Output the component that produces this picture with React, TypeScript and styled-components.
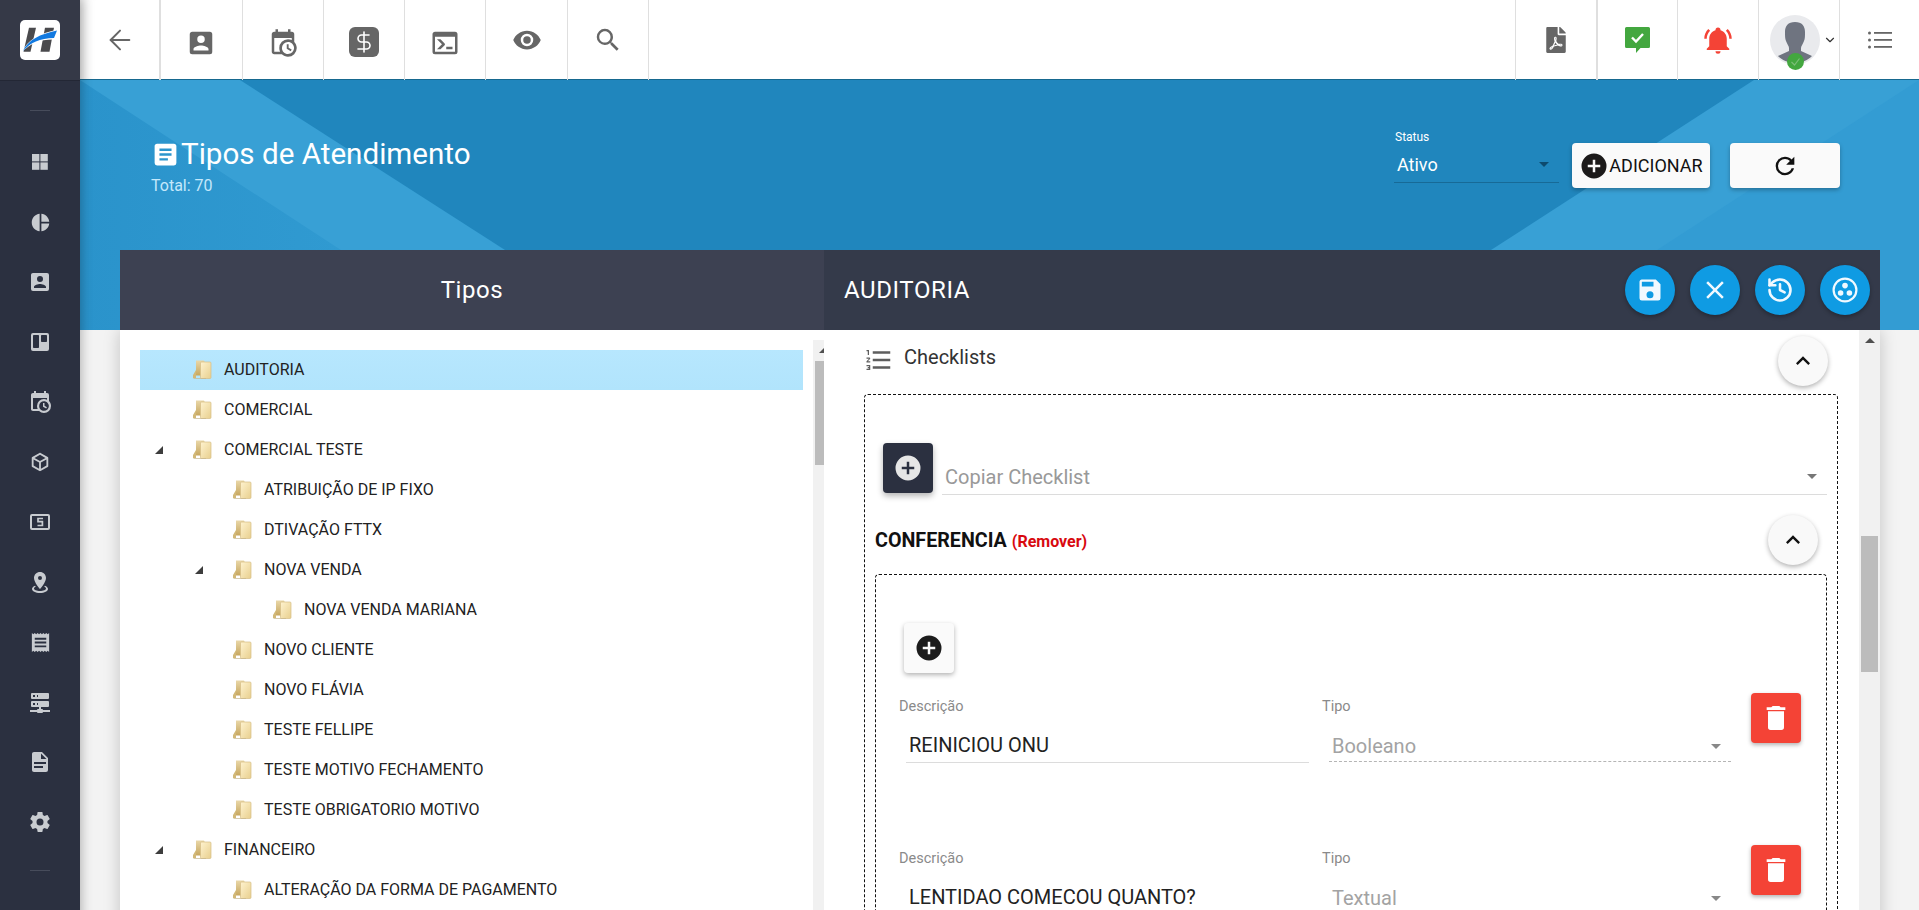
import React from "react";
import styled, { createGlobalStyle } from "styled-components";
import { ArrowLeft, DollarSign, History, ChevronDown } from "lucide-react";
import { FaFilePdf } from "react-icons/fa";

const Global = createGlobalStyle`
  html, body { margin: 0; padding: 0; height: 100%; overflow: hidden; }
  body { font-family: Roboto, "Liberation Sans", sans-serif; background: #f3f3f3; color: #222; }
  * { box-sizing: border-box; }
`;

const P = {
  account: "M6,17C6,15 10,14 12,14C14,14 18,15 18,17V18H6M15,9A3,3 0 0,1 12,12A3,3 0 0,1 9,9A3,3 0 0,1 12,6A3,3 0 0,1 15,9M3,5V19A2,2 0 0,0 5,21H19A2,2 0 0,0 21,19V5A2,2 0 0,0 19,3H5C3.89,3 3,3.9 3,5Z",
  calendar: "M15,13H16.5V15.82L18.94,17.23L18.19,18.53L15,16.69V13M19,8H5V19H9.67C9.24,18.09 9,17.07 9,16A7,7 0 0,1 16,9C17.07,9 18.09,9.24 19,9.67V8M5,21C3.89,21 3,20.1 3,19V5C3,3.89 3.89,3 5,3H6V1H8V3H16V1H18V3H19A2,2 0 0,1 21,5V11.1C22.24,12.36 23,14.09 23,16A7,7 0 0,1 16,23C14.09,23 12.36,22.24 11.1,21H5M16,11.15A4.85,4.85 0 0,0 11.15,16C11.15,18.68 13.32,20.85 16,20.85A4.85,4.85 0 0,0 20.85,16C20.85,13.32 18.68,11.15 16,11.15Z",
  console: "M20,19V7H4V19H20M20,3A2,2 0 0,1 22,5V19A2,2 0 0,1 20,21H4A2,2 0 0,1 2,19V5C2,3.89 2.9,3 4,3H20M13,17V15H18V17H13M9.58,13L5.57,9H8.4L11.7,12.3C12.09,12.69 12.09,13.33 11.7,13.72L8.42,17H5.59L9.58,13Z",
  eye: "M12,9A3,3 0 0,0 9,12A3,3 0 0,0 12,15A3,3 0 0,0 15,12A3,3 0 0,0 12,9M12,17A5,5 0 0,1 7,12A5,5 0 0,1 12,7A5,5 0 0,1 17,12A5,5 0 0,1 12,17M12,4.5C7,4.5 2.73,7.61 1,12C2.73,16.39 7,19.5 12,19.5C17,19.5 21.27,16.39 23,12C21.27,7.61 17,4.5 12,4.5Z",
  magnify: "M9.5,3A6.5,6.5 0 0,1 16,9.5C16,11.11 15.41,12.59 14.44,13.73L14.71,14H15.5L20.5,19L19,20.5L14,15.5V14.71L13.73,14.44C12.59,15.41 11.11,16 9.5,16A6.5,6.5 0 0,1 3,9.5A6.5,6.5 0 0,1 9.5,3M9.5,5C7,5 5,7 5,9.5C5,12 7,14 9.5,14C12,14 14,12 14,9.5C14,7 12,5 9.5,5Z",
  bell: "M21,19V20H3V19L5,17V11C5,7.9 7.03,5.17 10,4.29C10,4.19 10,4.1 10,4A2,2 0 0,1 12,2A2,2 0 0,1 14,4C14,4.1 14,4.19 14,4.29C16.97,5.17 19,7.9 19,11V17L21,19M14,21A2,2 0 0,1 12,23A2,2 0 0,1 10,21M19.75,3.19L18.33,4.61C20.04,6.3 21,8.6 21,11H23C23,8.07 21.84,5.25 19.75,3.19M1,11H3C3,8.6 3.96,6.3 5.67,4.61L4.25,3.19C2.16,5.25 1,8.07 1,11Z",
  pie: "M11,2V22C5.9,21.5 2,17.2 2,12C2,6.8 5.9,2.5 11,2M13,2V11H22C21.5,6.2 17.8,2.5 13,2M13,13V22C17.7,21.5 21.5,17.8 22,13H13Z",
  trello: "M5,3H19A2,2 0 0,1 21,5V19A2,2 0 0,1 19,21H5A2,2 0 0,1 3,19V5A2,2 0 0,1 5,3M5.8,5A0.8,0.8 0 0,0 5,5.8V17.2A0.8,0.8 0 0,0 5.8,18H10.2A0.8,0.8 0 0,0 11,17.2V5.8A0.8,0.8 0 0,0 10.2,5H5.8M13.8,5A0.8,0.8 0 0,0 13,5.8V11.2A0.8,0.8 0 0,0 13.8,12H18.2A0.8,0.8 0 0,0 19,11.2V5.8A0.8,0.8 0 0,0 18.2,5H13.8Z",
  cube: "M21,16.5C21,16.88 20.79,17.21 20.47,17.38L12.57,21.82C12.41,21.94 12.21,22 12,22C11.79,22 11.59,21.94 11.43,21.82L3.53,17.38C3.21,17.21 3,16.88 3,16.5V7.5C3,7.12 3.21,6.79 3.53,6.62L11.43,2.18C11.59,2.06 11.79,2 12,2C12.21,2 12.41,2.06 12.57,2.18L20.47,6.62C20.79,6.79 21,7.12 21,7.5V16.5M12,4.15L6.04,7.5L12,10.85L17.96,7.5L12,4.15M5,15.91L11,19.29V12.58L5,9.21V15.91M19,15.91V9.21L13,12.58V19.29L19,15.91Z",
  marker: "M12,2C15.31,2 18,4.66 18,7.95C18,12.41 12,19 12,19C12,19 6,12.41 6,7.95C6,4.66 8.69,2 12,2M12,6A2,2 0 0,0 10,8A2,2 0 0,0 12,10A2,2 0 0,0 14,8A2,2 0 0,0 12,6M20,19C20,21.21 16.42,23 12,23C7.58,23 4,21.21 4,19C4,17.71 5.22,16.56 7.11,15.83L7.75,16.74C6.67,17.19 6,17.81 6,18.5C6,19.88 8.69,21 12,21C15.31,21 18,19.88 18,18.5C18,17.81 17.33,17.19 16.25,16.74L16.89,15.83C18.78,16.56 20,17.71 20,19Z",
  receipt: "M3,22L4.5,20.5L6,22L7.5,20.5L9,22L10.5,20.5L12,22L13.5,20.5L15,22L16.5,20.5L18,22L19.5,20.5L21,22V2L19.5,3.5L18,2L16.5,3.5L15,2L13.5,3.5L12,2L10.5,3.5L9,2L7.5,3.5L6,2L4.5,3.5L3,2M18,9H6V7H18M18,13H6V11H18M18,17H6V15H18",
  server: "M13,19H14A1,1 0 0,1 15,20H22V22H15A1,1 0 0,1 14,23H10A1,1 0 0,1 9,22H2V20H9A1,1 0 0,1 10,19H11V17H4A1,1 0 0,1 3,16V12A1,1 0 0,1 4,11H20A1,1 0 0,1 21,12V16A1,1 0 0,1 20,17H13V19M4,3H20A1,1 0 0,1 21,4V8A1,1 0 0,1 20,9H4A1,1 0 0,1 3,8V4A1,1 0 0,1 4,3M9,7H10V5H9V7M9,15H10V13H9V15M5,5V7H7V5H5M5,13V15H7V13H5Z",
  file: "M13,9H18.5L13,3.5V9M6,2H14L20,8V20A2,2 0 0,1 18,22H6C4.89,22 4,21.1 4,20V4C4,2.89 4.89,2 6,2M15,18V16H6V18H15M18,14V12H6V14H18Z",
  cog: "M12,15.5A3.5,3.5 0 0,1 8.5,12A3.5,3.5 0 0,1 12,8.5A3.5,3.5 0 0,1 15.5,12A3.5,3.5 0 0,1 12,15.5M19.43,12.97C19.47,12.65 19.5,12.33 19.5,12C19.5,11.67 19.47,11.34 19.43,11L21.54,9.37C21.73,9.22 21.78,8.95 21.66,8.73L19.66,5.27C19.54,5.05 19.27,4.96 19.05,5.05L16.56,6.05C16.04,5.66 15.5,5.32 14.87,5.07L14.5,2.42C14.46,2.18 14.25,2 14,2H10C9.75,2 9.54,2.18 9.5,2.42L9.13,5.07C8.5,5.32 7.96,5.66 7.44,6.05L4.95,5.05C4.73,4.96 4.46,5.05 4.34,5.27L2.34,8.73C2.21,8.95 2.27,9.22 2.46,9.37L4.57,11C4.53,11.34 4.5,11.67 4.5,12C4.5,12.33 4.53,12.65 4.57,12.97L2.46,14.63C2.27,14.78 2.21,15.05 2.34,15.27L4.34,18.73C4.46,18.95 4.73,19.03 4.95,18.95L7.44,17.94C7.96,18.34 8.5,18.68 9.13,18.93L9.5,21.58C9.54,21.82 9.75,22 10,22H14C14.25,22 14.46,21.82 14.5,21.58L14.87,18.93C15.5,18.67 16.04,18.34 16.56,17.94L19.05,18.95C19.27,19.03 19.54,18.95 19.66,18.73L21.66,15.27C21.78,15.05 21.73,14.78 21.54,14.63L19.43,12.97Z",
  textBox: "M14,17H7V15H14M17,13H7V11H17M17,9H7V7H17M19,3H5C3.89,3 3,3.89 3,5V19A2,2 0 0,0 5,21H19A2,2 0 0,0 21,19V5C21,3.89 20.1,3 19,3Z",
  plusCircle: "M17,13H13V17H11V13H7V11H11V7H13V11H17M12,2A10,10 0 0,0 2,12A10,10 0 0,0 12,22A10,10 0 0,0 22,12A10,10 0 0,0 12,2Z",
  refresh: "M17.65,6.35C16.2,4.9 14.21,4 12,4A8,8 0 0,0 4,12A8,8 0 0,0 12,20C15.73,20 18.84,17.45 19.73,14H17.65C16.83,16.33 14.61,18 12,18A6,6 0 0,1 6,12A6,6 0 0,1 12,6C13.66,6 15.14,6.69 16.22,7.78L13,11H20V4L17.65,6.35Z",
  save: "M15,9H5V5H15M12,19A3,3 0 0,1 9,16A3,3 0 0,1 12,13A3,3 0 0,1 15,16A3,3 0 0,1 12,19M17,3H5C3.89,3 3,3.9 3,5V19A2,2 0 0,0 5,21H19A2,2 0 0,0 21,19V7L17,3Z",
  close: "M19,6.41L17.59,5L12,10.59L6.41,5L5,6.41L10.59,12L5,17.59L6.41,19L12,13.41L17.59,19L19,17.59L13.41,12L19,6.41Z",
  chevron: "M7.41,15.41L12,10.83L16.59,15.41L18,14L12,8L6,14L7.41,15.41Z",
  trash: "M19,4H15.5L14.5,3H9.5L8.5,4H5V6H19M6,19A2,2 0 0,0 8,21H16A2,2 0 0,0 18,19V7H6V19Z",
  numbered: "M7,13V11H21V13H7M7,19V17H21V19H7M7,7V5H21V7H7M3,8V5H2V4H4V8H3M2,17V16H5V20H2V19H4V18.5H3V17.5H4V17H2M4.25,10A0.75,0.75 0 0,1 5,10.75C5,10.95 4.92,11.14 4.79,11.27L3.12,13H5V14H2V13.08L4,11H2V10H4.25Z",
};

const Icon = ({ d, size = 24, color = "currentColor" }: { d: string; size?: number; color?: string }) => (
  <svg width={size} height={size} viewBox="0 0 24 24" fill={color} aria-hidden="true"><path d={d} /></svg>
);

/* ---------- page frame ---------- */
const Shell = styled.div`
  display: grid;
  grid-template-columns: 80px 1fr;
  height: 910px;
  width: 1919px;
  overflow: hidden;
`;

/* ---------- sidebar ---------- */
const Side = styled.aside`
  background: #2b3040;
  display: flex;
  flex-direction: column;
  align-items: center;
  box-shadow: 2px 0 10px rgba(0, 0, 0, 0.25);
  position: relative;
  z-index: 3;
`;
const LogoCell = styled.div`
  width: 100%;
  height: 81px;
  flex: none;
  background: #353947;
  border-bottom: 1px solid #232735;
  display: flex;
  align-items: center;
  justify-content: center;
  padding-bottom: 1px;
`;
const LogoTile = styled.div`
  width: 40px;
  height: 40px;
  background: #fff;
  border-radius: 5px;
  display: flex;
`;
const SideRule = styled.div`
  width: 20px;
  height: 1px;
  background: #474c5b;
  flex: none;
  margin-top: ${(p: { $top: number }) => p.$top}px;
`;
const SideList = styled.nav`
  display: flex;
  flex-direction: column;
  margin-top: 21px;
`;
const SideItem = styled.div`
  height: 60px;
  width: 80px;
  display: flex;
  align-items: center;
  justify-content: center;
  color: #c8cbd0;
`;

/* ---------- main ---------- */
const Main = styled.main`
  display: flex;
  flex-direction: column;
  min-width: 0;
  background: #f3f3f3;
`;
const TopBar = styled.header`
  height: 80px;
  flex: none;
  background: #fff;
  display: flex;
  justify-content: space-between;
  box-shadow: inset 16px 0 14px -14px rgba(0, 0, 0, 0.16);
  border-bottom: 1px solid #16688f;
  position: relative;
  z-index: 2;
`;
const TopGroup = styled.div`
  display: flex;
`;
const TopCell = styled.div<{ $w?: number; $strong?: boolean; $right?: boolean; $dy?: number }>`
  width: ${(p) => p.$w ?? 81.3}px;
  height: 80px;
  padding-top: ${(p) => p.$dy ?? 0}px;
  display: flex;
  align-items: center;
  justify-content: center;
  color: #666;
  border-${(p) => (p.$right ? "left" : "right")}: ${(p) => (p.$strong ? 2 : 1)}px solid #dfdfdf;
`;
const MoneyTile = styled.div`
  width: 30px;
  height: 30px;
  border-radius: 6px;
  background: #666;
  color: #fff;
  display: flex;
  align-items: center;
  justify-content: center;
`;
const AvatarWrap = styled.div`
  position: relative;
  width: 50px;
  height: 50px;
  border-radius: 50%;
  background: #e9eaed;
  margin: 0 3px 0 8px;
`;
const AvatarBadge = styled.div`
  position: absolute;
  left: 17px;
  top: 38px;
  width: 17px;
  height: 17px;
  border-radius: 50%;
  background: #43a73f;
  display: flex;
  align-items: center;
  justify-content: center;
`;

/* ---------- hero ---------- */
const Hero = styled.section`
  position: relative;
  height: 250px;
  flex: none;
  padding: 0 39px 0 40px;
  background: #2086bd;
  display: flex;
  flex-direction: column;
`;
const HeroArt = styled.svg`
  position: absolute;
  left: 0;
  top: 0;
  width: 100%;
  height: 250px;
`;
const HeroRow = styled.div`
  position: relative;
  height: 170px;
  flex: none;
  display: flex;
  justify-content: space-between;
`;
const TitleBlock = styled.div`
  padding: 58px 0 0 31px;
  color: #fff;
`;
const TitleLine = styled.h1`
  margin: 0;
  display: flex;
  align-items: center;
  font-size: 29.6px;
  font-weight: 400;
  line-height: 32px;
`;
const TitleIcon = styled.span`
  display: flex;
  margin-right: 1px;
`;
const Total = styled.div`
  font-size: 16px;
  line-height: 18px;
  margin-top: 7px;
  color: #c4e8fb;
`;
const HeroActions = styled.div`
  display: flex;
  padding-top: 49px;
  margin-right: 40px;
`;
const StatusField = styled.div`
  width: 165px;
  margin-right: 13px;
  color: #fff;
`;
const StatusLabel = styled.div`
  font-size: 12px;
  line-height: 16px;
  height: 19px;
  padding-left: 1px;
`;
const StatusValue = styled.div`
  height: 35px;
  border-bottom: 1px solid #176a97;
  display: flex;
  align-items: center;
  justify-content: space-between;
  padding: 0 10px 2px 3px;
  font-size: 18px;
`;
const Caret = styled.span<{ $color: string }>`
  width: 0;
  height: 0;
  border-left: 5px solid transparent;
  border-right: 5px solid transparent;
  border-top: 5px solid ${(p) => p.$color};
  flex: none;
`;
const HeroButton = styled.button<{ $w: number; $mr?: number }>`
  width: ${(p) => p.$w}px;
  height: 45px;
  margin-top: 14px;
  margin-right: ${(p) => p.$mr ?? 0}px;
  background: #fafafa;
  border: 0;
  border-radius: 4px;
  box-shadow: 0 2px 4px rgba(0, 0, 0, 0.28);
  display: flex;
  align-items: center;
  justify-content: center;
  font: 400 18px Roboto, sans-serif;
  color: #111;
  padding: 0;
`;

/* ---------- panel head ---------- */
const PanelHead = styled.div`
  position: relative;
  height: 80px;
  flex: none;
  display: grid;
  grid-template-columns: 704px 1fr;
  color: #fff;
`;
const HeadLeft = styled.div`
  background: #3d4152;
  display: flex;
  align-items: center;
  justify-content: center;
  font-size: 24px;
  letter-spacing: 0.6px;
`;
const HeadRight = styled.div`
  background: #343a4a;
  display: flex;
  align-items: center;
  justify-content: space-between;
  padding: 0 10px 0 20px;
  font-size: 24px;
  letter-spacing: 0.6px;
`;
const HeadButtons = styled.div`
  display: flex;
  gap: 15px;
`;
const RoundBlue = styled.button`
  width: 50px;
  height: 50px;
  border-radius: 50%;
  background: #0f9be3;
  color: #f1f9ff;
  border: 0;
  padding: 0;
  display: flex;
  align-items: center;
  justify-content: center;
  box-shadow: 0 2px 4px rgba(0, 0, 0, 0.3);
`;

/* ---------- panel body ---------- */
const PanelBody = styled.div`
  flex: 1;
  min-height: 0;
  margin: 0 39px 0 40px;
  background: #fff;
  box-shadow: 0 0 16px rgba(0, 0, 0, 0.2);
  display: grid;
  grid-template-columns: 704px 1fr;
  overflow: hidden;
`;
const TreePane = styled.div`
  display: flex;
  padding: 10px 0 8px 20px;
  min-height: 0;
  overflow: hidden;
`;
const TreeList = styled.ul`
  list-style: none;
  width: 663px;
  margin: 10px 10px 0 0;
  padding: 0;
  overflow: hidden;
  flex: none;
`;
const TreeRow = styled.li<{ $depth: number; $active?: boolean }>`
  height: 40px;
  display: flex;
  align-items: center;
  padding-left: ${(p) => 14 + p.$depth * 40}px;
  padding-bottom: 1px;
  background: ${(p) => (p.$active ? "linear-gradient(#b7e7fe, #b1e4fc)" : "transparent")};
  font-size: 16px;
  color: #222;
`;
const Twist = styled.span`
  width: 38px;
  flex: none;
  display: flex;
  padding-left: 1px;
`;
const FolderBox = styled.span`
  display: flex;
  margin-right: 12px;
`;
const ScrollTrack = styled.div`
  width: 21px;
  flex: none;
  background: #f1f1f1;
  display: flex;
  flex-direction: column;
  align-items: center;
  justify-content: space-between;
  position: relative;
`;
const ScrollThumb = styled.div<{ $top: number; $h: number }>`
  position: absolute;
  left: 2px;
  right: 2px;
  top: ${(p) => p.$top}px;
  height: ${(p) => p.$h}px;
  background: #bcbcbc;
`;
const ArrowBtn = styled.div<{ $down?: boolean }>`
  height: 21px;
  display: flex;
  align-items: center;
  justify-content: center;
  &::after {
    content: "";
    width: 0;
    height: 0;
    border-left: 5px solid transparent;
    border-right: 5px solid transparent;
    ${(p) => (p.$down ? "border-top: 5px solid #505050;" : "border-bottom: 5px solid #505050;")}
  }
`;

const FormPane = styled.div`
  display: flex;
  min-height: 0;
  overflow: hidden;
`;
const FormBody = styled.div`
  flex: 1;
  min-width: 0;
  padding: 6px 21px 0 40px;
  overflow: hidden;
`;
const SectionHead = styled.div`
  display: flex;
  align-items: flex-start;
  height: 58px;
`;
const SectionIcon = styled.span`
  display: flex;
  color: #5e5e5e;
  margin: 9px 10px 0 0;
`;
const SectionTitle = styled.div`
  font-size: 20px;
  line-height: 24px;
  margin-top: 9px;
  flex: 1;
  color: #333;
`;
const RoundLight = styled.button<{ $mr: number }>`
  width: 50px;
  height: 50px;
  flex: none;
  border-radius: 50%;
  border: 0;
  padding: 0;
  background: #f9f9f9;
  color: #111;
  display: flex;
  align-items: center;
  justify-content: center;
  box-shadow: 0 2px 5px rgba(0, 0, 0, 0.3);
  margin-right: ${(p) => p.$mr}px;
`;
const Dashed = styled.div<{ $pad: string }>`
  border: 1px dashed #111;
  border-radius: 4px;
  padding: ${(p) => p.$pad};
`;
const CopyRow = styled.div`
  display: flex;
  align-items: flex-end;
  gap: 9px;
  padding-left: 8px;
`;
const DarkAdd = styled.button`
  width: 50px;
  height: 50px;
  flex: none;
  border: 0;
  padding: 0;
  border-radius: 4px;
  background: #2b3040;
  color: #e6e6e6;
  display: flex;
  align-items: center;
  justify-content: center;
  box-shadow: 0 3px 6px rgba(0, 0, 0, 0.3);
`;
const CopySelect = styled.div`
  flex: 1;
  height: 36px;
  margin-bottom: -2px;
  border-bottom: 1px solid #dcdcdc;
  display: flex;
  align-items: center;
  justify-content: space-between;
  padding: 0 10px 0 3px;
  font-size: 20px;
  color: #999;
`;
const GroupHead = styled.div`
  display: flex;
  align-items: center;
  justify-content: space-between;
  height: 50px;
  margin: 22px 0 9px 0;
`;
const GroupTitle = styled.div`
  font-size: 19.7px;
  font-weight: 700;
  color: #111;
  display: flex;
  align-items: baseline;
  gap: 5px;
`;
const RemoveLink = styled.span`
  font-size: 16px;
  font-weight: 700;
  color: #d8090f;
`;
const LightAdd = styled.button`
  width: 50px;
  height: 50px;
  border: 0;
  padding: 0;
  border-radius: 4px;
  background: #fafafa;
  color: #1c1c1c;
  display: flex;
  align-items: center;
  justify-content: center;
  box-shadow: 0 2px 5px rgba(0, 0, 0, 0.3);
  margin-left: 28px;
`;
const ItemRow = styled.div`
  display: grid;
  grid-template-columns: 410px 416px 50px;
  column-gap: 13px;
  height: 152px;
  padding-left: 23px;
`;
const Field = styled.div`
  padding-top: 24px;
`;
const FieldLabel = styled.div`
  font-size: 14.5px;
  line-height: 20px;
  color: #8a8a8a;
`;
const TextValue = styled.div`
  margin: 10px 0 0 7px;
  height: 36px;
  border-bottom: 1px solid #dcdcdc;
  display: flex;
  align-items: center;
  padding: 0 3px;
  font-size: 20px;
  color: #222;
`;
const SelectValue = styled.div`
  margin: 14px 7px 0 7px;
  height: 31px;
  border-bottom: 1px dashed #b5b5b5;
  display: flex;
  align-items: center;
  justify-content: space-between;
  padding: 0 10px 0 3px;
  font-size: 20px;
  color: #a3a3a3;
`;
const DeleteBtn = styled.button`
  width: 50px;
  height: 50px;
  border: 0;
  padding: 0;
  margin-top: 20px;
  border-radius: 4px;
  background: #f44336;
  color: #fff;
  display: flex;
  align-items: center;
  justify-content: center;
  box-shadow: 0 2px 4px rgba(0, 0, 0, 0.3);
`;

/* ---------- drawings ---------- */
const Logo = () => (
  <svg width="40" height="40" viewBox="0 0 40 40" aria-hidden="true">
    <path d="M9 7.700h7L10.500 31.700H3.500z" fill="#4a4a4d" />
    <path d="M25 7.700h9L29.500 31.700h-9z" fill="#4a4a4d" />
    <path d="M2 32C7 20 20 13 38.500 9.500L35 19.500C21 19 10 23.500 2 32z" fill="#fff" />
    <path d="M3 31C8 20 20 14 37 10.500L34 18C20 18 10 23 3 31z" fill="#1179e0" />
  </svg>
);

const Folder = () => (
  <svg width="20" height="21" viewBox="0 0 20 21" aria-hidden="true">
    <defs>
      <linearGradient id="fld" x1="0" y1="0" x2="1" y2="1">
        <stop offset="0" stopColor="#fff3cf" />
        <stop offset="1" stopColor="#e8cf8e" />
      </linearGradient>
      <linearGradient id="flb" x1="0" y1="0" x2="0" y2="1">
        <stop offset="0" stopColor="#e9d7a8" />
        <stop offset="1" stopColor="#c7a75f" />
      </linearGradient>
    </defs>
    <path d="M4 1.500h8l1 2v13H4z" fill="url(#flb)" />
    <path d="M1 16l3-5v8H1z" fill="#d2b877" />
    <rect x="8.500" y="3" width="10.500" height="16.500" rx="1" fill="url(#fld)" stroke="#d6bd85" strokeWidth="0.7" />
    <path d="M1 19h13v1H2z" fill="#c8b78d" opacity="0.7" />
  </svg>
);

const TwistMark = () => (
  <svg width="8" height="8" viewBox="0 0 8 8" aria-hidden="true"><path d="M8 0v8H0z" fill="#3d3d3d" /></svg>
);

const Silhouette = () => (
  <svg width="50" height="50" viewBox="0 0 50 50" aria-hidden="true" style={{ display: "block" }}>
    <path d="M25 7c7 0 10 4 10 10 0 4 0 7-1 9-1 3-3 5-3 7v3l11 5c-4 4-10 7-17 7s-13-3-17-7l11-5v-3c0-2-2-4-3-7-1-2-1-5-1-9 0-6 3-10 10-10z" fill="#6f7480" />
  </svg>
);

const GroupCircles = () => (
  <svg width="30" height="30" viewBox="0 0 30 30" fill="none" aria-hidden="true">
    <circle cx="15" cy="15" r="11.400" stroke="currentColor" strokeWidth="2.200" />
    <circle cx="15" cy="10.600" r="2.800" fill="currentColor" />
    <circle cx="10.600" cy="18" r="2.800" fill="currentColor" />
    <circle cx="19.400" cy="18" r="2.800" fill="currentColor" />
  </svg>
);

const CashBox = () => (
  <svg width="24" height="24" viewBox="0 0 24 24" fill="none" aria-hidden="true">
    <rect x="3" y="5" width="18" height="14" rx="1" stroke="currentColor" strokeWidth="2" />
    <path d="M15 8.500h-5v3.200h4.400v3.800H9.500" stroke="currentColor" strokeWidth="1.700" />
  </svg>
);

const QuadSquares = () => (
  <svg width="20" height="20" viewBox="0 0 20 20" fill="currentColor" aria-hidden="true">
    <rect x="2" y="2" width="7.400" height="7.400" />
    <rect x="10.400" y="2" width="7.400" height="7.400" />
    <rect x="2" y="10.400" width="7.400" height="7.400" />
    <rect x="10.400" y="10.400" width="7.400" height="7.400" />
  </svg>
);

const Bubble = () => (
  <svg width="25" height="26" viewBox="0 0 25 26" aria-hidden="true">
    <path d="M1.500 0h22a1.500 1.500 0 0 1 1.500 1.500v18a1.500 1.500 0 0 1-1.500 1.500h-8L11 26v-5H1.500A1.500 1.500 0 0 1 0 19.500v-18A1.500 1.500 0 0 1 1.500 0z" fill="#43a73f" />
    <path d="M7 10.500l4 4 7-7.500" stroke="#fff" strokeWidth="2.400" fill="none" />
  </svg>
);

const BulletList = () => (
  <svg width="24" height="18" viewBox="0 0 24 18" fill="#666" aria-hidden="true">
    <circle cx="1.500" cy="2" r="1.500" /><circle cx="1.500" cy="9" r="1.500" /><circle cx="1.500" cy="16" r="1.500" />
    <rect x="6" y="1" width="18" height="1.800" /><rect x="6" y="8" width="18" height="1.800" /><rect x="6" y="15" width="18" height="1.800" />
  </svg>
);

/* ---------- data ---------- */
const sideIcons = [
  <QuadSquares key="a" />,
  <Icon key="b" d={P.pie} size={21} />,
  <Icon key="c" d={P.account} size={24} />,
  <Icon key="d" d={P.trello} size={24} />,
  <Icon key="e" d={P.calendar} size={24} />,
  <Icon key="f" d={P.cube} size={22} />,
  <CashBox key="g" />,
  <Icon key="h" d={P.marker} size={24} />,
  <Icon key="i" d={P.receipt} size={23} />,
  <Icon key="j" d={P.server} size={24} />,
  <Icon key="k" d={P.file} size={24} />,
  <Icon key="l" d={P.cog} size={24} />,
];

const tree: { label: string; depth: number; open?: boolean; active?: boolean }[] = [
  { label: "AUDITORIA", depth: 0, active: true },
  { label: "COMERCIAL", depth: 0 },
  { label: "COMERCIAL TESTE", depth: 0, open: true },
  { label: "ATRIBUIÇÃO DE IP FIXO", depth: 1 },
  { label: "DTIVAÇÃO FTTX", depth: 1 },
  { label: "NOVA VENDA", depth: 1, open: true },
  { label: "NOVA VENDA MARIANA", depth: 2 },
  { label: "NOVO CLIENTE", depth: 1 },
  { label: "NOVO FLÁVIA", depth: 1 },
  { label: "TESTE FELLIPE", depth: 1 },
  { label: "TESTE MOTIVO FECHAMENTO", depth: 1 },
  { label: "TESTE OBRIGATORIO MOTIVO", depth: 1 },
  { label: "FINANCEIRO", depth: 0, open: true },
  { label: "ALTERAÇÃO DA FORMA DE PAGAMENTO", depth: 1 },
];

const items = [
  { text: "REINICIOU ONU", type: "Booleano" },
  { text: "LENTIDAO COMECOU QUANTO?", type: "Textual" },
];

export default function App() {
  return (
    <>
      <Global />
      <Shell>
        <Side>
          <LogoCell>
            <LogoTile><Logo /></LogoTile>
          </LogoCell>
          <SideRule $top={29} />
          <SideList>
            {sideIcons.map((ic, i) => (
              <SideItem key={i}>{ic}</SideItem>
            ))}
          </SideList>
          <SideRule $top={18} />
        </Side>

        <Main>
          <TopBar>
            <TopGroup>
              <TopCell $strong><ArrowLeft size={32} strokeWidth={1.5} /></TopCell>
              <TopCell $dy={5}><Icon d={P.account} size={30} /></TopCell>
              <TopCell $dy={5}><Icon d={P.calendar} size={30} /></TopCell>
              <TopCell $dy={4}><MoneyTile><DollarSign size={24} strokeWidth={1.6} /></MoneyTile></TopCell>
              <TopCell $dy={5}><Icon d={P.console} size={30} /></TopCell>
              <TopCell><Icon d={P.eye} size={30} /></TopCell>
              <TopCell><Icon d={P.magnify} size={30} /></TopCell>
            </TopGroup>
            <TopGroup>
              <TopCell $w={81} $right><FaFilePdf size={26} /></TopCell>
              <TopCell $w={81} $right $strong><Bubble /></TopCell>
              <TopCell $w={81} $right><Icon d={P.bell} size={30} color="#f44336" /></TopCell>
              <TopCell $w={81} $right>
                <AvatarWrap>
                  <Silhouette />
                  <AvatarBadge>
                    <svg width="11" height="11" viewBox="0 0 11 11" aria-hidden="true"><path d="M1.500 6l3 3 5-6.500" stroke="#7bbd77" strokeWidth="1.200" fill="none" /></svg>
                  </AvatarBadge>
                </AvatarWrap>
                <ChevronDown size={14} strokeWidth={2} color="#333" />
              </TopCell>
              <TopCell $w={80} $right><BulletList /></TopCell>
            </TopGroup>
          </TopBar>

          <Hero>
            <HeroArt viewBox="0 0 1839 250" preserveAspectRatio="none" aria-hidden="true">
              <defs>
                <linearGradient id="bandA" x1="0" y1="0" x2="1" y2="0">
                  <stop offset="0" stopColor="#2a93cb" />
                  <stop offset="1" stopColor="#309ad1" />
                </linearGradient>
              </defs>
              <polygon points="0,0 160,0 425,170 425,250 0,250" fill="#38a0d5" />
              <polygon points="0,0 261,170 261,250 0,250" fill="url(#bandA)" />
              <polygon points="1674,0 1839,0 1839,250 1411,250 1411,170" fill="#38a0d5" />
              <polygon points="1839,0 1839,250 1577,250 1577,170" fill="#339cd3" />
            </HeroArt>

            <HeroRow>
              <TitleBlock>
                <TitleLine>
                  <TitleIcon><Icon d={P.textBox} size={29} /></TitleIcon>
                  Tipos de Atendimento
                </TitleLine>
                <Total>Total: 70</Total>
              </TitleBlock>
              <HeroActions>
                <StatusField>
                  <StatusLabel>Status</StatusLabel>
                  <StatusValue>Ativo<Caret $color="#0d4a6e" /></StatusValue>
                </StatusField>
                <HeroButton $w={138} $mr={20}>
                  <Icon d={P.plusCircle} size={30} color="#1c1a1a" />
                  ADICIONAR
                </HeroButton>
                <HeroButton $w={110}><Icon d={P.refresh} size={28} color="#111" /></HeroButton>
              </HeroActions>
            </HeroRow>

            <PanelHead>
              <HeadLeft>Tipos</HeadLeft>
              <HeadRight>
                AUDITORIA
                <HeadButtons>
                  <RoundBlue><Icon d={P.save} size={28} /></RoundBlue>
                  <RoundBlue><Icon d={P.close} size={30} /></RoundBlue>
                  <RoundBlue><History size={28} strokeWidth={2.2} /></RoundBlue>
                  <RoundBlue><GroupCircles /></RoundBlue>
                </HeadButtons>
              </HeadRight>
            </PanelHead>
          </Hero>

          <PanelBody>
            <TreePane>
              <TreeList>
                {tree.map((r) => (
                  <TreeRow key={r.label} $depth={r.depth} $active={r.active}>
                    <Twist>{r.open ? <TwistMark /> : null}</Twist>
                    <FolderBox><Folder /></FolderBox>
                    {r.label}
                  </TreeRow>
                ))}
              </TreeList>
              <ScrollTrack>
                <ArrowBtn />
                <ScrollThumb $top={21} $h={104} />
                <ArrowBtn $down />
              </ScrollTrack>
            </TreePane>

            <FormPane>
              <FormBody>
                <SectionHead>
                  <SectionIcon><Icon d={P.numbered} size={30} /></SectionIcon>
                  <SectionTitle>Checklists</SectionTitle>
                  <RoundLight $mr={10}><Icon d={P.chevron} size={28} /></RoundLight>
                </SectionHead>
                <Dashed $pad="48px 10px 0 10px">
                  <CopyRow>
                    <DarkAdd><Icon d={P.plusCircle} size={30} /></DarkAdd>
                    <CopySelect>Copiar Checklist<Caret $color="#777" /></CopySelect>
                  </CopyRow>
                  <GroupHead>
                    <GroupTitle>CONFERENCIA <RemoveLink>(Remover)</RemoveLink></GroupTitle>
                    <RoundLight $mr={9}><Icon d={P.chevron} size={28} /></RoundLight>
                  </GroupHead>
                  <Dashed $pad="48px 0 0 0">
                    <LightAdd><Icon d={P.plusCircle} size={30} /></LightAdd>
                    {items.map((it) => (
                      <ItemRow key={it.text}>
                        <Field>
                          <FieldLabel>Descrição</FieldLabel>
                          <TextValue>{it.text}</TextValue>
                        </Field>
                        <Field>
                          <FieldLabel>Tipo</FieldLabel>
                          <SelectValue>{it.type}<Caret $color="#888" /></SelectValue>
                        </Field>
                        <DeleteBtn><Icon d={P.trash} size={32} /></DeleteBtn>
                      </ItemRow>
                    ))}
                  </Dashed>
                </Dashed>
              </FormBody>
              <ScrollTrack>
                <ArrowBtn />
                <ScrollThumb $top={206} $h={136} />
                <ArrowBtn $down />
              </ScrollTrack>
            </FormPane>
          </PanelBody>
        </Main>
      </Shell>
    </>
  );
}
